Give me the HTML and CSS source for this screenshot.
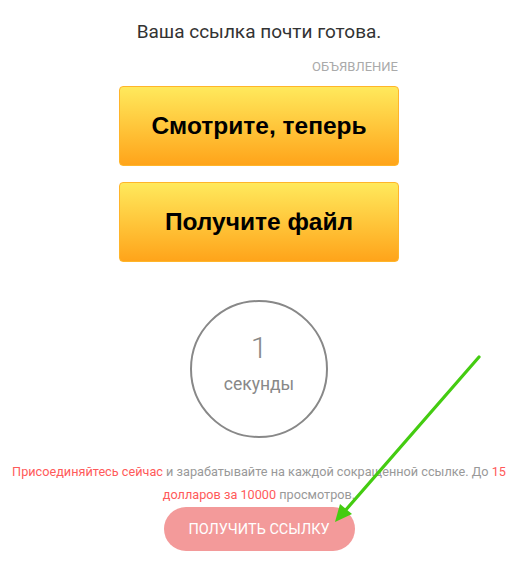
FILE: index.html
```html
<!DOCTYPE html>
<html lang="ru">
<head>
<meta charset="utf-8">
<link rel="stylesheet" href="styles.css">
</head>
<body>
<div class="page">
  <h1 class="title">Ваша ссылка почти готова.</h1>
  <div class="ads">
    <div class="ad-label">ОБЪЯВЛЕНИЕ</div>
    <a class="ad-btn">Смотрите, теперь</a>
    <a class="ad-btn">Получите файл</a>
  </div>
  <div class="timer">
    <div class="timer-num">1</div>
    <div class="timer-unit">секунды</div>
  </div>
  <p class="promo"><span class="red">Присоединяйтесь сейчас</span> и зарабатывайте на каждой сокращенной ссылке. До <span class="red">15 долларов за 10000</span> просмотров.</p>
  <div class="cta-row"><a class="cta">ПОЛУЧИТЬ ССЫЛКУ</a></div>
  <svg class="arrow" width="523" height="579" viewBox="0 0 523 579">
    <line x1="479" y1="357" x2="344" y2="512" stroke="#44cc11" stroke-width="3.2" stroke-linecap="round"/>
    <polygon points="335,522 340,504 352,514" fill="#44cc11"/>
  </svg>
</div>
</body>
</html>
```
FILE: styles.css
```css
html, body { margin: 0; padding: 0; background: #fff; }
body { font-family: Roboto, "Noto Sans", sans-serif; }
.page { position: relative; width: 523px; height: 579px; display: flex; flex-direction: column; align-items: center; }
.title { margin: 21px 0 0 0; padding-right: 5px; font-size: 19px; font-weight: 400; color: #333; line-height: 22px; }
.ads { width: 280px; margin: 16px 0 0 -5px; display: flex; flex-direction: column; gap: 16px; }
.ad-label { text-align: right; font-size: 13px; color: #aaa; line-height: 16px; margin-bottom: -5px; margin-right: 1px; }
.ad-btn { display: flex; align-items: center; justify-content: center; height: 78px; border: 1px solid #ffb52a; border-radius: 4px; background: linear-gradient(#ffe95c, #ffa41a); font-family: "Liberation Sans", Arial, sans-serif; font-weight: 700; font-size: 24.5px; color: #000; }
.timer { margin: 38px 0 0 -5px; width: 134px; height: 134px; border: 2px solid #888; border-radius: 50%; display: flex; flex-direction: column; align-items: center; justify-content: center; color: #888; }
.timer-num { font-size: 30px; font-weight: 300; line-height: 32px; margin-top: -12px; }
.timer-unit { font-size: 17.5px; line-height: 20px; margin-top: 10px; }
.promo { margin: 22px 0 0 0; width: 515px; padding-right: 5px; text-align: center; font-size: 12.7px; line-height: 23px; color: #999; }
.red { color: #ff5a5a; }
.cta-row { margin-top: 1px; margin-left: -5px; }
.cta { display: flex; align-items: center; justify-content: center; width: 191px; height: 44px; border-radius: 22px; background: #f39a9a; color: #fff; font-size: 14.5px; }
.arrow { position: absolute; left: 0; top: 0; pointer-events: none; }
```
